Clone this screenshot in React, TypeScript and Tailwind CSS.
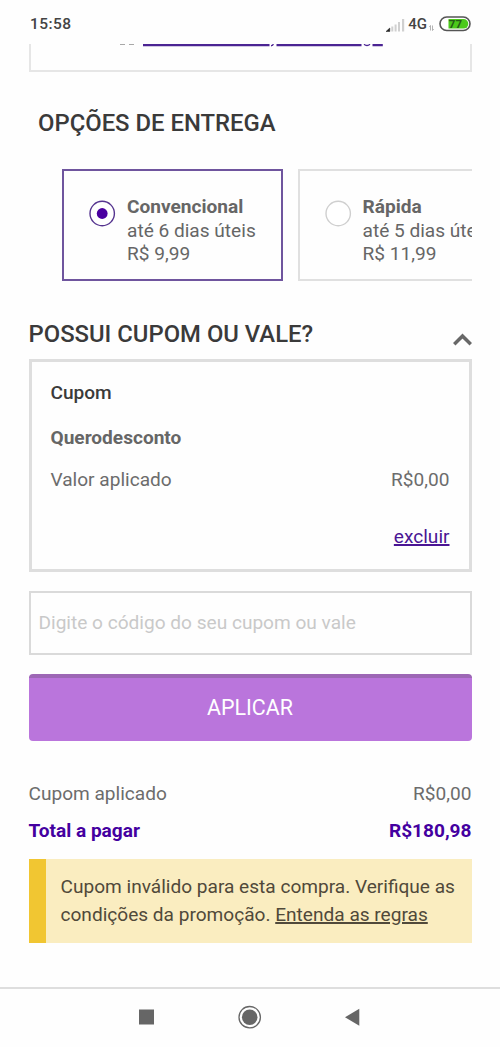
import React from "react";

const DeliveryOption = ({
  name,
  time,
  price,
  selected = false,
}: {
  name: string;
  time: string;
  price: string;
  selected?: boolean;
}) => (
  <div
    className={
      selected
        ? "flex h-[112px] w-[221px] shrink-0 border-2 border-[#6f559e] pl-[25px]"
        : "flex h-[112px] w-[221px] shrink-0 border-2 border-[#e0e0e0] pl-[25px]"
    }
  >
    <svg className="mt-[29px] h-[27px] w-[27px] shrink-0" viewBox="0 0 27 27">
      <circle cx="13.2" cy="13.5" r="12.2" fill="white" stroke={selected ? "#55348f" : "#cfcfcf"} strokeWidth="1.4" />
      {selected && <circle cx="13.2" cy="13.5" r="5.4" fill="#4a00a0" />}
    </svg>
    <div className="ml-[11px] mt-6 whitespace-nowrap text-[19.1px] leading-[23.6px] text-[#666]">
      <p className="font-bold">{name}</p>
      <p>{time}</p>
      <p>{price}</p>
    </div>
  </div>
);

export default function App() {
  return (
    <div className="flex h-[1047px] w-[500px] flex-col overflow-hidden bg-[#fefefe] font-['Roboto',sans-serif] text-[19.08px] text-[#6c6c6c]">
      <header className="flex h-11 shrink-0 items-center pl-[30px] pr-[29px] pt-[4px] font-medium text-[#444]">
        <span className="text-[15.5px] leading-5 tracking-[0.45px]">15:58</span>
        <svg className="ml-auto mt-px h-[14px] w-[19px]" viewBox="0 0 19 14">
          <path d="M0 13.5 3.8 10v3.5Z" fill="#222" stroke="#222" strokeWidth=".5" />
          <path d="M5.3 8.5h2v5h-2zM8.6 6.5h2v7h-2zM12 4h2v9.5h-2zM16 1h2.2v12.5H16z" fill="#d0d0d0" />
        </svg>
        <span className="ml-[3px] text-[15px] leading-5">4G</span>
        <svg className="ml-[2px] mt-[7px] h-[6px] w-[5px]" viewBox="0 0 5 6">
          <path d="M1.5 5.5v-5L.3 2M3.5.5v5L4.7 4" fill="none" stroke="#aaa" strokeWidth=".9" />
        </svg>
        <svg className="ml-[5px] h-[16px] w-[32px]" viewBox="0 0 32 16">
          <rect x="1" y="1" width="30" height="13.5" rx="6.75" fill="white" stroke="#555" strokeWidth="1.6" />
          <path d="M9.5 3h15a4.8 4.8 0 0 1 0 9.6h-15Z" fill="#4bc91b" />
          <text x="9.8" y="12" fontSize="11.5" fontWeight="700" fill="#245b18">77</text>
        </svg>
      </header>
      <main className="flex min-h-0 flex-1 flex-col px-[28.5px]">
        <div className="h-7 shrink-0 border-2 border-t-0 border-[#e6e6e6]">
          <svg className="h-[4px] w-full" viewBox="0 0 439 4">
            <path d="M89 .4h5M98 .4h5" stroke="#858585" strokeWidth=".8" />
            <path d="M112 1.2h126.5M245.5 1.2h85M341.5 1.2h10.3" stroke="#4b2493" strokeWidth="2.2" />
            <path d="M240 1.8q2 0 2.3-1.8M333 .3q3 2.6 6 0" fill="none" stroke="#4b2493" strokeWidth="1.4" />
          </svg>
        </div>
        <h2 className="ml-[9.5px] mt-[37px] h-7 shrink-0 text-[23.85px] font-medium leading-7 text-[#3a3a3a]">OPÇÕES DE ENTREGA</h2>
        <section className="ml-[33.5px] mt-8 flex shrink-0 gap-[14.5px] overflow-hidden">
          <DeliveryOption name="Convencional" time="até 6 dias úteis" price="R$ 9,99" selected />
          <DeliveryOption name="Rápida" time="até 5 dias úteis" price="R$ 11,99" />
        </section>
        <div className="mt-[39px] flex h-[39px] shrink-0 items-start justify-between">
          <h2 className="text-[23.85px] font-medium leading-7 text-[#3a3a3a]">POSSUI CUPOM OU VALE?</h2>
          <svg className="mt-[13px] h-[13px] w-[19px]" viewBox="0 0 19 13">
            <path d="M1.2 11.3 9.5 3l8.3 8.3" fill="none" stroke="#686868" strokeWidth="3.6" />
          </svg>
        </div>
        <section className="flex h-[213px] shrink-0 flex-col border-[3px] border-[#dedede] px-[19px] leading-6">
          <p className="mt-[19px] font-medium text-[#3a3a3a]">Cupom</p>
          <p className="mt-[21px] font-bold text-[#666]">Querodesconto</p>
          <div className="mt-[18px] flex justify-between">
            <span>Valor aplicado</span>
            <span>R$0,00</span>
          </div>
          <a className="mt-[33px] self-end text-[#4a1594] underline decoration-[1.5px]">excluir</a>
        </section>
        <div className="mt-[19px] flex h-16 shrink-0 items-center border-2 border-[#dadada] pl-2 pt-px text-[#c9c9c9]">
          Digite o código do seu cupom ou vale
        </div>
        <button className="mt-[19px] h-[67px] shrink-0 rounded-[4px] border-t-[4px] border-[#9d67b5] bg-[#ba75dc] pb-[3px] text-[21.4px] text-white">
          APLICAR
        </button>
        <div className="mt-[41px] flex shrink-0 justify-between leading-6">
          <span>Cupom aplicado</span>
          <span>R$0,00</span>
        </div>
        <div className="mt-[13px] flex shrink-0 justify-between font-bold leading-6 text-[#4400a0]">
          <span>Total a pagar</span>
          <span>R$180,98</span>
        </div>
        <div className="mt-4 h-[84px] shrink-0 whitespace-nowrap border-l-[17.5px] border-[#f1c632] bg-[#faedc0] pl-[15px] pt-[14px] leading-7 text-[#50493a]">
          <p>Cupom inválido para esta compra. Verifique as</p>
          <p>
            condições da promoção. <a className="underline decoration-[1.5px]">Entenda as regras</a>
          </p>
        </div>
      </main>
      <nav className="h-[60px] shrink-0 border-t-2 border-[#dedede]">
        <svg className="h-[58px] w-[500px]" viewBox="0 0 500 58" fill="#666">
          <path d="M139 20.5h15v15h-15zM345 28.3l14.3-8.5v17Z" />
          <circle cx="249.7" cy="28.2" r="7.8" />
          <circle cx="249.7" cy="28.2" r="10.7" fill="none" stroke="#666" strokeWidth="1.3" />
        </svg>
      </nav>
    </div>
  );
}
